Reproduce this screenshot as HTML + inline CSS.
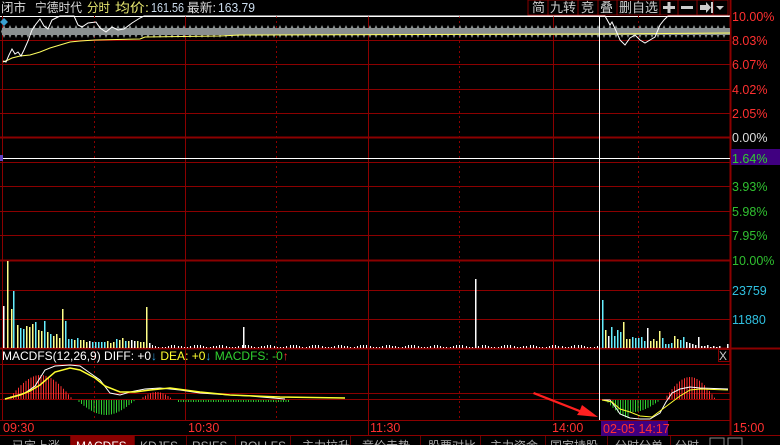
<!DOCTYPE html>
<html><head><meta charset="utf-8"><style>
body{margin:0;background:#000;width:780px;height:445px;overflow:hidden;font-family:"Liberation Sans","Noto Sans CJK SC",sans-serif}
svg{position:absolute;left:0;top:0}
text{font-family:"Liberation Sans","Noto Sans CJK SC",sans-serif}
</style></head><body>
<svg id="s" width="780" height="445" viewBox="0 0 780 445">
<rect width="780" height="445" fill="#000"/>
<g font-size="12.5">
<text x="1" y="12" fill="#ddd" textLength="25" lengthAdjust="spacingAndGlyphs">闭市</text>
<text x="35" y="12" fill="#ddd" textLength="47" lengthAdjust="spacingAndGlyphs">宁德时代</text>
<text x="87" y="12" fill="#e8e870" textLength="23" lengthAdjust="spacingAndGlyphs">分时</text>
<text x="115" y="12" fill="#e8e870" textLength="34" lengthAdjust="spacingAndGlyphs">均价:</text>
<text x="151" y="12" fill="#cde" textLength="33" lengthAdjust="spacingAndGlyphs">161.56</text>
<text x="187" y="12" fill="#ddd" textLength="29" lengthAdjust="spacingAndGlyphs">最新:</text>
<text x="218" y="12" fill="#cde" textLength="37" lengthAdjust="spacingAndGlyphs">163.79</text>
</g>
<g stroke="#800" fill="none"><rect x="528" y="0" width="200" height="15"/>
<line x1="548" y1="0" x2="548" y2="15"/><line x1="578" y1="0" x2="578" y2="15"/><line x1="598" y1="0" x2="598" y2="15"/><line x1="617" y1="0" x2="617" y2="15"/><line x1="660" y1="0" x2="660" y2="15"/><line x1="678" y1="0" x2="678" y2="15"/><line x1="697" y1="0" x2="697" y2="15"/><line x1="713" y1="0" x2="713" y2="15"/></g>
<g font-size="13" fill="#ccc"><text x="532" y="12">简</text><text x="550" y="12">九转</text><text x="581" y="12">竞</text><text x="600" y="12">叠</text><text x="619" y="12">删自选</text></g>
<g fill="#ccc"><rect x="663" y="6" width="12" height="3"/><rect x="667.5" y="2" width="3" height="11"/><rect x="681" y="6" width="12" height="3"/><polygon points="700,5 706,5 706,2 711,7.5 706,13 706,10 700,10"/><rect x="711" y="2" width="2" height="11"/><polygon points="716,6 724,6 720,10"/></g>
<g stroke="#8b0000" stroke-width="1">
<line x1="0" y1="16.5" x2="730" y2="16.5" stroke="#fff"/>
<line x1="0" y1="40.5" x2="730" y2="40.5"/><line x1="0" y1="64.5" x2="730" y2="64.5"/><line x1="0" y1="89.5" x2="730" y2="89.5"/><line x1="0" y1="113.5" x2="730" y2="113.5"/>
<line x1="0" y1="137.5" x2="730" y2="137.5" stroke-width="2"/>
<line x1="0" y1="162.5" x2="730" y2="162.5"/><line x1="0" y1="186.5" x2="730" y2="186.5"/><line x1="0" y1="211.5" x2="730" y2="211.5"/><line x1="0" y1="235.5" x2="730" y2="235.5"/>
<line x1="0" y1="260.5" x2="730" y2="260.5" stroke-width="2"/>
<line x1="0" y1="290.5" x2="730" y2="290.5"/><line x1="0" y1="319.5" x2="730" y2="319.5"/>
<line x1="0" y1="348.5" x2="780" y2="348.5" stroke-width="2"/>
<line x1="0" y1="364.5" x2="730" y2="364.5"/><line x1="0" y1="393.5" x2="730" y2="393.5"/><line x1="0" y1="399.5" x2="730" y2="399.5"/>
<line x1="0" y1="420.5" x2="730" y2="420.5"/>
<line x1="185.5" y1="16" x2="185.5" y2="420"/><line x1="368.5" y1="16" x2="368.5" y2="435"/><line x1="553.5" y1="16" x2="553.5" y2="420"/>
<line x1="730.5" y1="0" x2="730.5" y2="435" stroke-width="2"/>
<line x1="2.5" y1="16" x2="2.5" y2="420"/>
<g stroke-dasharray="2,3"><line x1="94.5" y1="16" x2="94.5" y2="420"/><line x1="276.5" y1="16" x2="276.5" y2="420"/><line x1="459.5" y1="16" x2="459.5" y2="420"/><line x1="638.5" y1="16" x2="638.5" y2="420"/></g>
<line x1="0" y1="435.5" x2="780" y2="435.5"/>
</g>
<rect x="2" y="28" width="728" height="7" fill="#8a9090"/>
<g id="dia" fill="#8a9090"></g>
<polygon points="4,18 8,22 4,26 0,22" fill="#3aa0d0"/>
<polyline fill="none" stroke="#ffff60" stroke-width="1" points="3,62 8,60 12,58 20,56 30,55 40,52 50,48 60,45 70,42 80,41 95,40 140,39 145,37 220,36 240,35 600,34 730,33"/>
<polyline fill="none" stroke="#fff" stroke-width="1" points="3,61 6,62 9,55 12,49 15,54 18,52 21,56 24,50 28,41 32,30 36,24 40,19 44,26 48,29 52,20 56,18 60,16 74,16 78,25 82,27 88,23 96,22 100,28 106,32 112,27 118,30 124,29 132,23 140,18 144,16 600,16 605,16 610,25 612,22 617,33 620,40 625,45 630,38 635,35 640,40 645,43 650,40 655,37 660,25 664,20 668,16 730,16"/>
<line x1="599.5" y1="16" x2="599.5" y2="420" stroke="#fff"/>
<line x1="0" y1="158.5" x2="730" y2="158.5" stroke="#fff"/>
<rect x="0" y="155" width="3" height="6" fill="#6040c0"/>
<rect x="731" y="149" width="49" height="16" fill="#400080"/>
<g font-size="12.5">
<text x="732" y="21" fill="#ff3030">10.00%</text><text x="732" y="45" fill="#ff3030">8.03%</text><text x="732" y="69" fill="#ff3030">6.07%</text><text x="732" y="94" fill="#ff3030">4.02%</text><text x="732" y="118" fill="#ff3030">2.05%</text>
<text x="732" y="142" fill="#ddd">0.00%</text><text x="732" y="163" fill="#30d030">1.64%</text>
<text x="732" y="191" fill="#30c030">3.93%</text><text x="732" y="216" fill="#30c030">5.98%</text><text x="732" y="240" fill="#30c030">7.95%</text><text x="732" y="265" fill="#30c030">10.00%</text>
<text x="732" y="295" fill="#30c0e0">23759</text><text x="732" y="324" fill="#30c0e0">11880</text>
</g>
<g id="vol"></g>
<text x="2" y="360" font-size="12" fill="#fff">MACDFS(12,26,9) DIFF: +0<tspan fill="#30a0e0">↓</tspan> <tspan fill="#ffff30">DEA: +0</tspan><tspan fill="#30a0e0">↓</tspan> <tspan fill="#30d030">MACDFS: -0</tspan><tspan fill="#ff3030">↑</tspan></text>
<rect x="718.5" y="349.5" width="11" height="12" fill="none" stroke="#800"/>
<text x="719" y="360" font-size="12" fill="#ccc">X</text>
<g id="mb"></g>
<polyline fill="none" stroke="#fff" points="5,399 15,396 25,393 35,386 45,370 55,366 70,365 80,366 90,373 100,380 110,393 120,395 130,392 145,389 160,388 180,390 200,393 230,395 250,396 285,399"/>
<polyline fill="none" stroke="#ffff30" stroke-width="1.5" points="5,399 20,395 30,391 40,385 55,372 70,368 80,370 95,378 105,386 120,392 135,392 150,390 170,388 200,392 230,395 280,397 345,398"/>
<polyline fill="none" stroke="#fff" points="602,400 610,400 616,408 620,414 630,418 640,419 650,419 660,413 666,402 672,393 680,389 690,387 700,388 728,389"/>
<polyline fill="none" stroke="#ffff30" points="602,400 612,402 620,409 630,412 640,416 652,417 664,408 672,402 680,396 690,390 700,389 728,390"/>
<polygon points="534,392 580,410 582,405 598,417 577,415 579,412 533,394" fill="#ff2020"/>
<g font-size="12.5" fill="#ff3030"><text x="3" y="432">09:30</text><text x="188" y="432">10:30</text><text x="370" y="432">11:30</text><text x="552" y="432">14:00</text><text x="733" y="432">15:00</text></g>
<rect x="601" y="421" width="67" height="15" fill="#400080"/>
<text x="603" y="433" font-size="12.5" fill="#ff3030">02-05 14:17</text>
<rect x="71" y="436" width="63" height="9" fill="#8b0000"/>
<g stroke="#600"><line x1="70.5" y1="436" x2="70.5" y2="445"/><line x1="134.5" y1="436" x2="134.5" y2="445"/><line x1="186.5" y1="436" x2="186.5" y2="445"/><line x1="235.5" y1="436" x2="235.5" y2="445"/><line x1="290.5" y1="436" x2="290.5" y2="445"/><line x1="350.5" y1="436" x2="350.5" y2="445"/><line x1="420.5" y1="436" x2="420.5" y2="445"/><line x1="480.5" y1="436" x2="480.5" y2="445"/><line x1="545.5" y1="436" x2="545.5" y2="445"/><line x1="607.5" y1="436" x2="607.5" y2="445"/><line x1="670.5" y1="436" x2="670.5" y2="445"/></g>
<rect x="710" y="438" width="14" height="8" fill="none" stroke="#888"/><rect x="728" y="438" width="14" height="8" fill="none" stroke="#888"/>
<g font-size="12" fill="#aaa"><text x="12" y="450">已定上涨</text><text x="76" y="450" fill="#fff">MACDFS</text><text x="140" y="450">KDJFS</text><text x="192" y="450">RSIFS</text><text x="240" y="450">BOLLFS</text><text x="302" y="450">主力拉升</text><text x="362" y="450">竞价走势</text><text x="428" y="450">股票对比</text><text x="490" y="450">主力资金</text><text x="550" y="450">国家持股</text><text x="615" y="450">分时分单</text><text x="675" y="450">分时</text></g>
</svg>
<script>
var s='http://www.w3.org/2000/svg';
function el(t,a,p){var e=document.createElementNS(s,t);for(var k in a)e.setAttribute(k,a[k]);document.getElementById(p).appendChild(e);}
for(var x=4;x<730;x+=6){el('polygon',{points:(x-3)+',31.5 '+x+',25 '+(x+3)+',31.5 '+x+',38'},'dia');}
var W='#fff',Y='#ff8',C='#6ef';
var v=[[3,306,W],[7,261,Y],[11,309,Y],[13,291,C],[17,325,Y],[20,328,C],[23,329,C],[26,326,Y],[29,327,Y],[32,324,Y],[35,322,C],[38,330,Y],[41,331,Y],[44,321,C],[47,332,Y],[50,334,C],[53,336,Y],[56,334,Y],[59,338,Y],[62,309,Y],[65,321,C],[68,339,C],[71,339,C],[74,340,Y],[77,338,C],[80,340,Y],[83,340,Y],[86,342,Y],[89,341,W],[92,342,C],[95,342,C],[98,342,C],[101,342,C],[104,342,C],[107,341,Y],[110,343,Y],[113,342,Y],[116,339,C],[119,340,Y],[122,338,Y],[125,341,C],[128,341,Y],[131,340,W],[134,341,W],[137,341,Y],[140,342,Y],[143,342,Y],[146,307,Y],[149,343,W],[243,327,W],[475,279,W],[602,300,C],[605,330,Y],[608,336,W],[611,327,C],[614,336,C],[617,330,C],[620,332,C],[623,322,Y],[626,339,Y],[629,339,Y],[632,337,C],[635,338,C],[638,338,C],[641,337,C],[644,341,C],[647,328,W],[650,341,Y],[653,339,Y],[656,341,Y],[659,331,Y],[662,338,C],[665,344,C],[668,344,C],[671,343,C],[674,336,Y],[677,339,Y],[680,340,C],[683,337,C],[686,342,W],[689,343,W],[692,344,W],[695,345,W],[698,337,W],[701,346,W],[704,346,W],[707,345,W],[710,347,W],[713,346,W],[716,347,W],[719,346,W],[727,344,W]];
for(var x=152;x<600;x+=3.2){var h=Math.round((Math.sin(x*1.7)+1)*1)+1;el('rect',{x:Math.round(x),y:348-h,width:1,height:h,fill:'#fff'},'vol');}
v.forEach(function(b){el('rect',{x:b[0],y:b[1],width:1.5,height:348-b[1],fill:b[2]},'vol');});
for(var x=8;x<72;x+=2.5){var r=Math.sin((x-8)/64*Math.PI);var h=r*24;el('rect',{x:x,y:399-h,width:1,height:h,fill:'#ff3030'},'mb');}
for(var x=76;x<135;x+=2.5){var h=Math.sin((x-76)/59*Math.PI)*15;el('rect',{x:x,y:400,width:1,height:h,fill:'#30d030'},'mb');}
for(var x=140;x<172;x+=2.5){var h=Math.sin((x-140)/32*Math.PI)*7;el('rect',{x:x,y:399-h,width:1,height:h,fill:'#ff3030'},'mb');}
for(var x=178;x<290;x+=2.5){el('rect',{x:x,y:400,width:1,height:2,fill:'#30d030'},'mb');}
for(var x=605;x<660;x+=2.5){var h=Math.sin((x-605)/55*Math.PI)*(x<630?19:12);el('rect',{x:x,y:400,width:1,height:h,fill:'#30d030'},'mb');}
for(var x=664;x<715;x+=2.5){var h=Math.sin((x-664)/51*Math.PI)*22;el('rect',{x:x,y:399-h,width:1,height:h,fill:'#ff3030'},'mb');}
</script>
</body></html>
